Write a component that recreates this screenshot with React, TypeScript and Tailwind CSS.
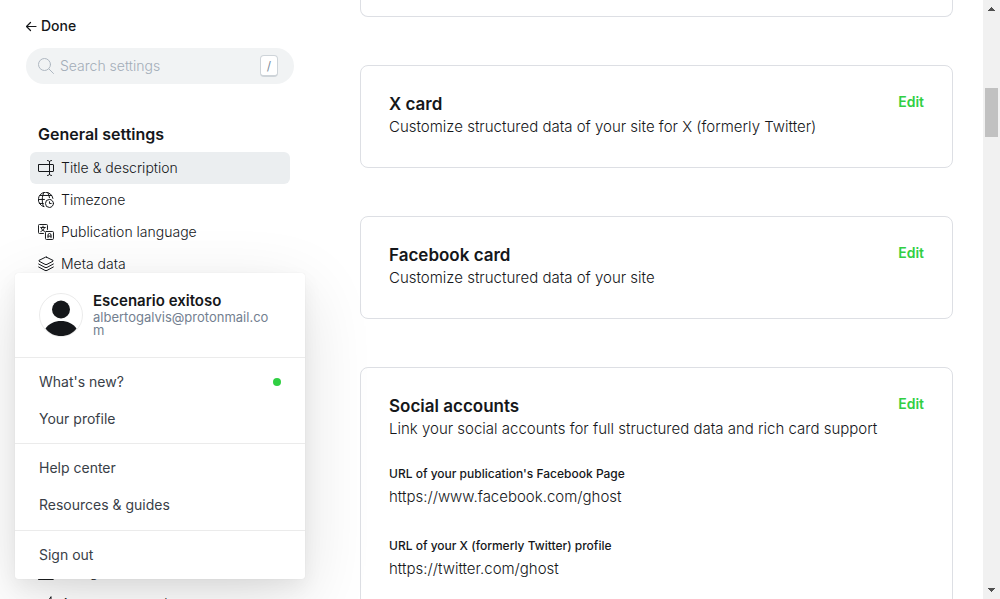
import type { ReactNode } from 'react';

const iconProps = {
  width: 16,
  height: 16,
  viewBox: '0 0 24 24',
  fill: 'none',
  stroke: 'currentColor',
  strokeWidth: 1.5,
  strokeLinecap: 'round' as const,
  strokeLinejoin: 'round' as const,
  'aria-hidden': true,
};

function TextboxIcon() {
  return (
    <svg {...iconProps}>
      <rect x=".75" y="6.750" width="22.500" height="10.500" rx=".75" />
      <path d="M17.250 3v18M14.250.750c1.700 0 3 1 3 2.250 0-1.250 1.300-2.250 3-2.250M14.250 23.250c1.700 0 3-1 3-2.250 0 1.250 1.300 2.250 3 2.250" />
    </svg>
  );
}

function TimezoneIcon() {
  return (
    <svg {...iconProps}>
      <circle cx="17.2" cy="17.2" r="6" />
      <path d="M19.8 17.2h-2.6v-2.6M8.7 22A11 11 0 1 1 22.4 9.6M8.7 22c-1.2-1.6-2.3-5.5-2.3-10.1S7.500 3 8.700 1.200M1 11.200h8.700M3 5.200h17.500M2 17.200h6M14.800 1.200a17 17 0 0 1 2.400 7.300" />
    </svg>
  );
}

function LanguageIcon() {
  return (
    <svg {...iconProps}>
      <path d="M8.200 14.200H2.200a1.500 1.500 0 0 1-1.500-1.500V2.200A1.500 1.500 0 0 1 2.200.700h10.500a1.500 1.500 0 0 1 1.500 1.500v6M12.700 11.200h9a1.500 1.500 0 0 1 1.500 1.500v9a1.500 1.500 0 0 1-1.500 1.500h-9a1.500 1.500 0 0 1-1.500-1.500v-9a1.500 1.500 0 0 1 1.500-1.500Z" />
      <path d="M7.500 3.200v2M4 5.200h7M9.800 5.200c-.8 3-3 5-5.500 6M5.200 6.500c1 2.600 3 4.200 5.300 4.700M15 20.500v-4a2.200 2.200 0 0 1 4.500 0v4M15 18.200h4.500" />
    </svg>
  );
}

function LayersIcon() {
  return (
    <svg {...iconProps}>
      <path d="m12.600 1.700 9.900 4.900a.7.7 0 0 1 0 1.200l-9 4.700a3.200 3.200 0 0 1-3 0l-9-4.700a.7.7 0 0 1 0-1.200l9.900-4.900a1.400 1.400 0 0 1 1.200 0Z" />
      <path d="m23 12-9.500 5.100a3.200 3.200 0 0 1-3 0L1 12M23 16.500l-9.500 5.100a3.200 3.200 0 0 1-3 0L1 16.500" />
    </svg>
  );
}

function PanelIcon() {
  return (
    <svg {...iconProps}>
      <path d="M1 2.500h22v20.700H1ZM1 7.500h22M9 7.500v15" />
    </svg>
  );
}

function MegaphoneIcon() {
  return (
    <svg {...iconProps}>
      <path d="M3 9.500h5c4 0 9-3 11.500-8.500v17c-2.500-3-7.500-4-11.500-4H3ZM5.500 14l2 9h3.500l-1.500-9" />
    </svg>
  );
}

type NavEntry = { label: string; icon: ReactNode; active?: boolean };

const general: NavEntry[] = [
  { label: 'Title & description', icon: <TextboxIcon />, active: true },
  { label: 'Timezone', icon: <TimezoneIcon /> },
  { label: 'Publication language', icon: <LanguageIcon /> },
  { label: 'Meta data', icon: <LayersIcon /> },
  { label: 'X card', icon: <PanelIcon /> },
  { label: 'Facebook card', icon: <PanelIcon /> },
  { label: 'Social accounts', icon: <PanelIcon /> },
  { label: 'Make this site private', icon: <PanelIcon /> },
  { label: 'Users and permissions', icon: <PanelIcon /> },
  { label: 'Staff', icon: <PanelIcon /> },
];

const site: NavEntry[] = [
  { label: 'Design', icon: <PanelIcon /> },
  { label: 'Announcement bar', icon: <MegaphoneIcon /> },
];

function NavGroup({ title, items }: { title: string; items: NavEntry[] }) {
  return (
    <section>
      <h2 className="pb-2 pl-2 text-base leading-5 font-semibold">{title}</h2>
      <ul>
        {items.map((item) => (
          <li key={item.label}>
            <button
              type="button"
              className={`flex h-8 w-full items-center gap-[7px] rounded-md px-2 text-left text-sm font-light text-[#15171a] ${item.active ? 'bg-[#ebeef0]' : ''}`}
            >
              {item.icon}
              {item.label}
            </button>
          </li>
        ))}
      </ul>
    </section>
  );
}

function Sidebar() {
  return (
    <aside className="w-80 shrink-0 pt-4 pr-[26px] pl-[26px]">
      <a href="#done" className="flex h-5 items-center gap-1 text-sm font-medium">
        <svg width="11" height="11" viewBox="0 0 11 11" fill="none" stroke="currentColor" strokeWidth="1.2" strokeLinecap="round" strokeLinejoin="round" aria-hidden="true">
          <path d="M10 5.500H.8M4.500 1.500l-4 4 4 4" />
        </svg>
        Done
      </a>
      <div className="mt-3 flex h-9 items-center rounded-full bg-[#f1f3f4] pr-4 pl-3">
        <svg width="16" height="16" viewBox="0 0 16 16" fill="none" stroke="#aeb7c1" strokeWidth="1" strokeLinecap="round" aria-hidden="true">
          <circle cx="6.500" cy="6.500" r="6" />
          <path d="m11 11 4.500 4.500" />
        </svg>
        <input
          type="text"
          aria-label="Search settings"
          placeholder="Search settings"
          className="ml-[6px] w-0 min-w-0 flex-1 bg-transparent text-sm font-light outline-none placeholder:text-[#a3adb8]"
        />
        <kbd className="flex h-[22px] w-[18px] items-center justify-center rounded border border-b-2 border-[#ced4d9] bg-white font-[Inter,sans-serif] text-xs text-[#7c8b9a]">
          /
        </kbd>
      </div>
      <nav className="mt-10 flex flex-col gap-14 pr-1 pl-1">
        <NavGroup title="General settings" items={general} />
        <NavGroup title="Site" items={site} />
      </nav>
    </aside>
  );
}

function Card({ title, description, children }: { title: string; description: string; children?: ReactNode }) {
  return (
    <section className="rounded-lg border border-[#dddfe4] px-7 pt-[25px] pb-7">
      <div className="flex items-start justify-between">
        <div>
          <h2 className="pt-0.5 text-[17px] leading-[22px] font-semibold">{title}</h2>
          <p className="text-[15px] leading-6 font-light">{description}</p>
        </div>
        <button type="button" className="text-sm leading-[22px] font-semibold text-[#30cf43]">
          Edit
        </button>
      </div>
      {children}
    </section>
  );
}

function Field({ label, value }: { label: string; value: string }) {
  return (
    <div>
      <dt className="pb-0.5 text-xs leading-[18px] font-medium">{label}</dt>
      <dd className="text-[15px] leading-6 font-light">{value}</dd>
    </div>
  );
}

function MenuItem({ label, dot }: { label: string; dot?: boolean }) {
  return (
    <li>
      <a href="#menu" className="flex h-[37px] items-center justify-between px-6 text-sm text-[#394047]">
        {label}
        {dot && <span className="size-2 rounded-full bg-[#30cf43]" />}
      </a>
    </li>
  );
}

function AccountMenu() {
  return (
    <div className="absolute bottom-5 left-[15px] w-[290px] rounded-[3px] bg-white shadow-[0_0_1px_rgba(0,0,0,0.12),0_8px_20px_rgba(0,0,0,0.06),0_20px_70px_rgba(0,0,0,0.12)]">
      <div className="flex h-[84px] items-center gap-[10px] pr-8 pl-6">
        <svg width="44" height="44" viewBox="0 0 44 44" className="shrink-0" aria-hidden="true">
          <circle cx="22" cy="22" r="21.500" fill="#fff" stroke="#ebebeb" />
          <circle cx="22" cy="16.500" r="9" fill="#15171a" />
          <path d="M6.500 35.500C10 30.500 15.500 28 22 28s12 2.500 15.500 7.500C34 40.500 28 43 22 43S10 40.500 6.500 35.500Z" fill="#15171a" />
        </svg>
        <div className="min-w-0 flex-1 pb-0.5">
          <p className="text-[15px] leading-5 font-semibold">Escenario exitoso</p>
          <p className="text-[13px] leading-[13px] break-all text-[#738090]">albertogalvis@protonmail.com</p>
        </div>
      </div>
      <ul className="border-t border-[#ebebeb] pt-[5px] pb-[6px]">
        <MenuItem label="What's new?" dot />
        <MenuItem label="Your profile" />
      </ul>
      <ul className="border-t border-[#ebebeb] pt-[5px] pb-[7px]">
        <MenuItem label="Help center" />
        <MenuItem label="Resources & guides" />
      </ul>
      <ul className="border-t border-[#ebebeb] pt-[5px] pb-[6px]">
        <MenuItem label="Sign out" />
      </ul>
    </div>
  );
}

function ScrollRail() {
  return (
    <div className="flex w-[17px] shrink-0 flex-col items-center bg-[#f1f1f1]" aria-hidden="true">
      <svg width="17" height="17" viewBox="0 0 17 17" fill="#505050" shapeRendering="crispEdges">
        <path d="M5 11h7v-1h-1V9h-1V8H9V7H8v1H7v1H6v1H5Z" />
      </svg>
      <div className="mt-[71px] h-[49px] w-[13px] bg-[#c1c1c1]" />
      <svg className="mt-auto" width="17" height="17" viewBox="0 0 17 17" fill="#505050" shapeRendering="crispEdges">
        <path d="M5 6h7v1h-1v1h-1v1H9v1H8V9H7V8H6V7H5Z" />
      </svg>
    </div>
  );
}

export default function App() {
  return (
    <div className="relative flex h-screen overflow-hidden bg-white font-[Inter,sans-serif] text-[#15171a]">
      <Sidebar />
      <main className="flex min-w-0 flex-1 flex-col gap-12 pr-[30px] pl-10">
        <div className="h-[17px] shrink-0 rounded-b-lg border border-t-0 border-[#dddfe4]" />
        <Card title="X card" description="Customize structured data of your site for X (formerly Twitter)" />
        <Card title="Facebook card" description="Customize structured data of your site" />
        <Card title="Social accounts" description="Link your social accounts for full structured data and rich card support">
          <dl className="mt-6 flex flex-col gap-7">
            <Field label="URL of your publication's Facebook Page" value="https://www.facebook.com/ghost" />
            <Field label="URL of your X (formerly Twitter) profile" value="https://twitter.com/ghost" />
          </dl>
        </Card>
      </main>
      <ScrollRail />
      <AccountMenu />
    </div>
  );
}
